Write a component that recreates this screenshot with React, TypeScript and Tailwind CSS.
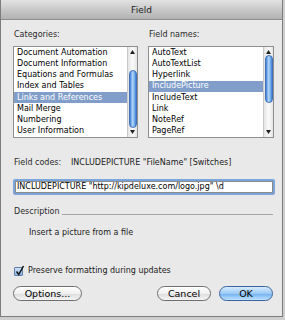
const categories = [
  'Document Automation',
  'Document Information',
  'Equations and Formulas',
  'Index and Tables',
  'Links and References',
  'Mail Merge',
  'Numbering',
  'User Information',
];

const fieldNames = [
  'AutoText',
  'AutoTextList',
  'Hyperlink',
  'IncludePicture',
  'IncludeText',
  'Link',
  'NoteRef',
  'PageRef',
];

function Scrollbar({ top, height }: { top: number; height: number }) {
  return (
    <div className="relative w-[10px] h-full border-l border-[#c9c9c9] bg-[linear-gradient(to_right,#e4e4e4,#fafafa_50%,#e6e6e6)]">
      {/* up arrow */}
      <svg className="absolute left-[2px] top-[3px]" width="5" height="4" viewBox="0 0 5 4">
        <path d="M2.5 0 L5 4 L0 4 Z" fill="#222" />
      </svg>
      <div
        className="absolute left-[1px] w-[8px] rounded-full border border-[#3f72ba] bg-[linear-gradient(to_right,#3f80d6,#b6d8fa_45%,#7db2ec_70%,#3f80d6)]"
        style={{ top, height }}
      />
      {/* down arrow */}
      <svg className="absolute left-[2px] bottom-[3px]" width="5" height="4" viewBox="0 0 5 4">
        <path d="M0 0 L5 0 L2.5 4 Z" fill="#222" />
      </svg>
    </div>
  );
}

function ListBox({
  items,
  selected,
  width,
  thumbTop,
  thumbHeight,
}: {
  items: string[];
  selected: number;
  width: string;
  thumbTop: number;
  thumbHeight: number;
}) {
  return (
    <div className={`${width} h-[92px] flex border border-[#8e8e8e] bg-white`}>
      <div className="flex-1 flex flex-col">
        {items.map((item, i) => (
          <div
            key={item}
            className={
              i === selected
                ? 'h-[11.25px] pl-[3px] flex items-center bg-[#809ec9] text-white'
                : 'h-[11.25px] pl-[3px] flex items-center text-black'
            }
          >
            {item}
          </div>
        ))}
      </div>
      <Scrollbar top={thumbTop} height={thumbHeight} />
    </div>
  );
}

export default function App() {
  return (
    <div
      className="w-[285px] h-[320px] bg-[#cfcfcf] overflow-hidden text-[8px] leading-[10px] text-[#1a1a1a]"
      style={{ fontFamily: '"DejaVu Sans", "Liberation Sans", sans-serif' }}
    >
      <div className="w-[283px] h-[317px] flex flex-col border-l border-r border-b border-[#7d7d7d] bg-[#e9e9e9]">
        {/* Title bar */}
        <div className="h-[20px] flex items-center justify-center border-b border-[#8f8f8f] bg-[linear-gradient(to_bottom,#e2e2e2,#c9c9c9_50%,#b2b2b2)] text-[9px] text-[#222]">
          Field
        </div>

        <div className="flex flex-col pl-[12px] pr-[8px]">
          {/* Lists */}
          <div className="flex gap-[10px] pt-[10px]">
            <div className="flex flex-col gap-[6px]">
              <div className="pl-[1px] text-[#2a2a2a]">Categories:</div>
              <ListBox
                items={categories}
                selected={4}
                width="w-[125px]"
                thumbTop={23}
                thumbHeight={58}
              />
            </div>
            <div className="flex flex-col gap-[6px]">
              <div className="pl-[1px] text-[#2a2a2a]">Field names:</div>
              <ListBox
                items={fieldNames}
                selected={3}
                width="w-[126px]"
                thumbTop={8}
                thumbHeight={48}
              />
            </div>
          </div>

          {/* Field codes */}
          <div className="flex mt-[20px] pl-[1px]">
            <div className="w-[57px] text-[#2a2a2a]">Field codes:</div>
            <div>INCLUDEPICTURE "FileName" [Switches]</div>
          </div>

          {/* Field code input */}
          <div className="mt-[11px] w-[262px] h-[16px] rounded-[2px] border-2 border-[#7ba6dc] bg-white">
            <div className="h-full flex items-center pl-[1px] border border-[#8b8b8b] text-black">
              INCLUDEPICTURE "http://kipdeluxe.com/logo.jpg" \d
            </div>
          </div>

          {/* Description */}
          <div className="mt-[12px] flex items-center gap-[2px] pl-[1px]">
            <span className="text-[#2a2a2a]">Description</span>
            <div className="flex-1 h-[1px] mt-[5px] mr-[1px] bg-[#a3a3a3]" />
          </div>
          <div className="mt-[11px] pl-[16px]">Insert a picture from a file</div>

          {/* Checkbox */}
          <div className="mt-[28px] flex items-center gap-[5px] pl-[1px]">
            <div className="relative w-[9px] h-[9px] rounded-[1px] border border-[#5d7ca8] bg-[linear-gradient(to_bottom,#cfe2f8,#8db7e8)]">
              <svg className="absolute left-[0px] top-[-3px]" width="10" height="11" viewBox="0 0 10 11">
                <path d="M1.5 6.5 L3.8 9.5 L8.5 1" stroke="#111" strokeWidth="1.5" fill="none" />
              </svg>
            </div>
            <span>Preserve formatting during updates</span>
          </div>

          {/* Buttons */}
          <div className="mt-[10px] flex items-center">
            <button className="w-[69px] h-[15px] rounded-full border border-[#6f6f6f] bg-[linear-gradient(to_bottom,#ffffff,#f0f0f0_50%,#dcdcdc_51%,#f4f4f4)] text-[9.5px] leading-[10px] text-black">
              Options...
            </button>
            <div className="flex-1" />
            <button className="w-[54px] h-[15px] rounded-full border border-[#6f6f6f] bg-[linear-gradient(to_bottom,#ffffff,#f0f0f0_50%,#dcdcdc_51%,#f4f4f4)] text-[9.5px] leading-[10px] text-black">
              Cancel
            </button>
            <button className="ml-[8px] mr-[1px] w-[54px] h-[15px] rounded-full border border-[#3c64a0] bg-[linear-gradient(to_bottom,#d6ebfd,#9ccaf6_50%,#6fb0f0_51%,#bfe2fd)] text-[9.5px] leading-[10px] text-black">
              OK
            </button>
          </div>
        </div>
      </div>
    </div>
  );
}
